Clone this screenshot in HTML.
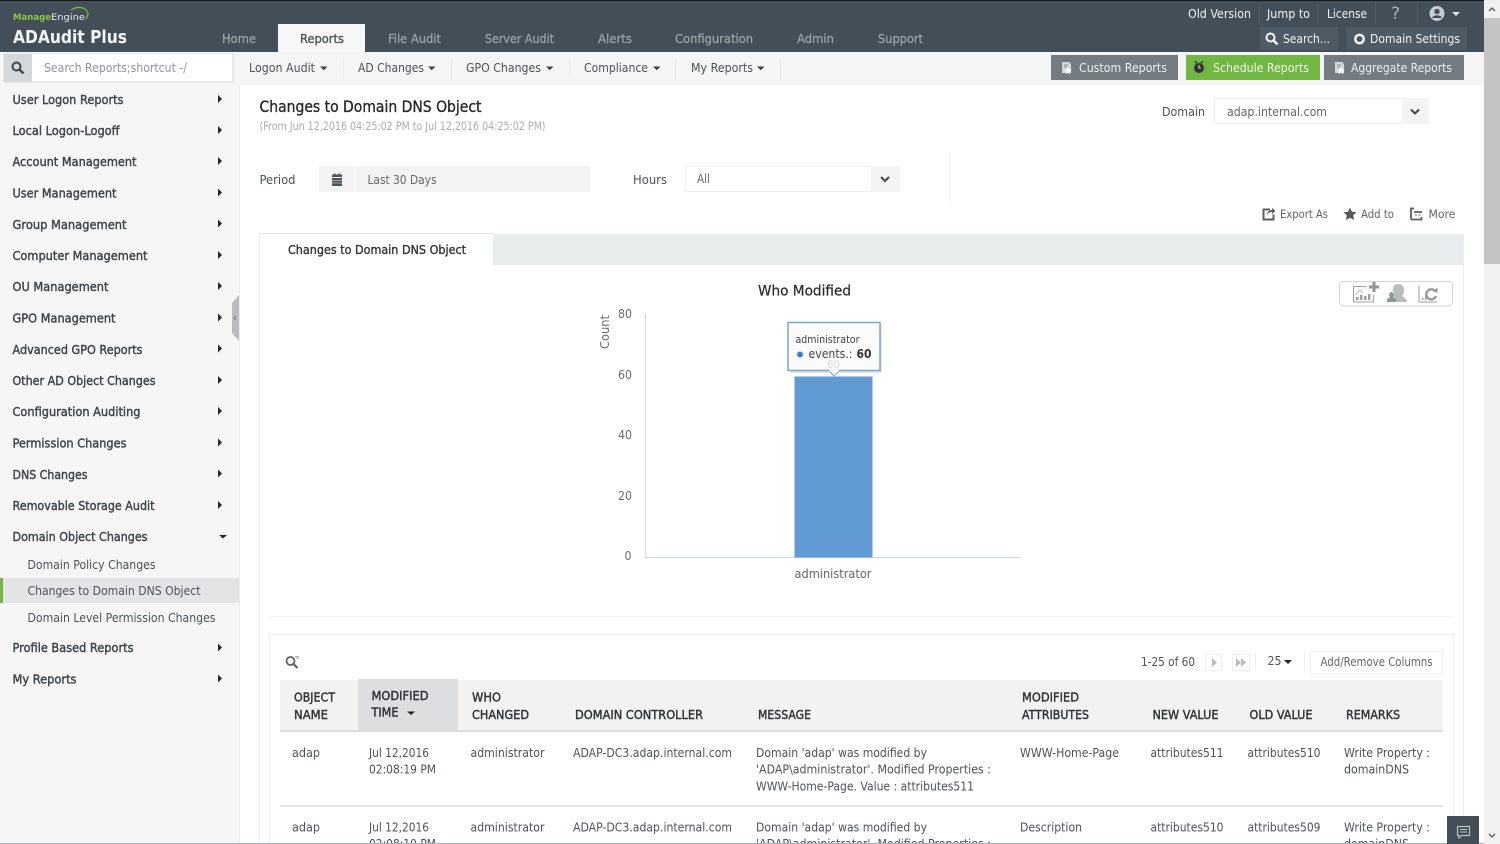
<!DOCTYPE html>
<html><head><meta charset="utf-8"><title>ADAudit Plus</title>
<style>
html,body{margin:0;padding:0;width:1500px;height:844px;overflow:hidden;background:#fff}
svg{display:block}
text{font-family:"DejaVu Sans","Liberation Sans",sans-serif;font-size:12px;fill:#444c52}
.s{stroke:#3c444a;stroke-width:.4px;fill:#3c444a}
.h{stroke:#2e3235;stroke-width:.4px;fill:#2e3235;font-size:12px}
.n{fill:#9aa3a9;font-size:12px;stroke:#9aa3a9;stroke-width:.25px}
.w{fill:#f1f3f4}
.c{fill:#4b5358}
.g{fill:#666}
.b{fill:#e9ecee}
</style></head><body>
<svg width="1500" height="844" viewBox="0 0 1500 844" xmlns="http://www.w3.org/2000/svg">
<defs></defs>
<rect width="1500" height="844" fill="#fff"/>
<!-- top bar -->
<rect width="1484" height="52" fill="#434f58"/>
<rect width="1484" height="1" fill="#15191c"/>
<text x="13" y="20" style="font-size:9px;font-weight:bold;fill:#8ac640" textLength="38" lengthAdjust="spacingAndGlyphs">Manage</text>
<text x="51" y="20" style="font-size:9px;fill:#e8ecee" textLength="34" lengthAdjust="spacingAndGlyphs">Engine</text>
<path d="M71 10c6-4 13-3 16 1 1.500 2 1 5-1 8" fill="none" stroke="#77b53b" stroke-width="1.300"/>
<text x="13" y="43" style="font-size:18px;font-weight:bold;fill:#f5f6f7" textLength="114" lengthAdjust="spacingAndGlyphs">ADAudit Plus</text>
<rect x="278" y="24" width="87" height="28" fill="#f7f7f7"/>
<text x="222" y="43" class="n" textLength="34" lengthAdjust="spacingAndGlyphs">Home</text>
<text x="300" y="43" style="fill:#4b5358;stroke:#4b5358;stroke-width:.35px" textLength="44" lengthAdjust="spacingAndGlyphs">Reports</text>
<text x="388" y="43" class="n" textLength="53" lengthAdjust="spacingAndGlyphs">File Audit</text>
<text x="485" y="43" class="n" textLength="69" lengthAdjust="spacingAndGlyphs">Server Audit</text>
<text x="598" y="43" class="n" textLength="34" lengthAdjust="spacingAndGlyphs">Alerts</text>
<text x="675" y="43" class="n" textLength="78" lengthAdjust="spacingAndGlyphs">Configuration</text>
<text x="797" y="43" class="n" textLength="37" lengthAdjust="spacingAndGlyphs">Admin</text>
<text x="878" y="43" class="n" textLength="45" lengthAdjust="spacingAndGlyphs">Support</text>
<text x="1188" y="18" class="w" textLength="63" lengthAdjust="spacingAndGlyphs">Old Version</text>
<text x="1267" y="18" class="w" textLength="43" lengthAdjust="spacingAndGlyphs">Jump to</text>
<text x="1327" y="18" class="w" textLength="40" lengthAdjust="spacingAndGlyphs">License</text>
<text x="1391" y="19" style="font-size:17px;fill:#aab2b7">?</text>
<g fill="#535e67"><rect x="1258.500" y="3" width="1" height="21"/><rect x="1317.500" y="3" width="1" height="21"/><rect x="1375" y="3" width="1" height="21"/><rect x="1417" y="3" width="1" height="21"/></g>
<circle cx="1437" cy="13.500" r="7.500" fill="#c9ced1"/><circle cx="1437" cy="11.500" r="2.700" fill="#434f58"/><path d="M1432 18c1-3.500 9-3.500 10 0" fill="#434f58"/>
<path d="M1452 12h8l-4 4z" fill="#e4e7e9"/>
<rect x="1260" y="27" width="78" height="23" fill="#4f5b64"/>
<rect x="1346" y="27" width="121" height="23" fill="#4f5b64"/>
<circle cx="1270.500" cy="37.500" r="4" fill="none" stroke="#f2f4f5" stroke-width="2"/><path d="M1273.500 40.500l4 4" stroke="#f2f4f5" stroke-width="2.400"/>
<text x="1283" y="43" class="w" textLength="47" lengthAdjust="spacingAndGlyphs">Search...</text>
<circle cx="1359.500" cy="39" r="4.200" fill="none" stroke="#f2f4f5" stroke-width="2.400"/>
<text x="1370" y="43" class="w" textLength="90" lengthAdjust="spacingAndGlyphs">Domain Settings</text>
<!-- toolbar -->
<rect y="52" width="1484" height="33" fill="#f5f5f5"/>
<rect x="3" y="53" width="231" height="30" fill="#e9e9e9"/>
<rect x="4" y="54" width="28" height="28" fill="#d3d8db"/>
<rect x="32" y="54" width="200" height="27" fill="#fff"/>
<circle cx="16.500" cy="66.500" r="4" fill="none" stroke="#3d464c" stroke-width="2"/><path d="M19.500 69.500l4 4" stroke="#3d464c" stroke-width="2.400"/>
<text x="44" y="72" style="fill:#8f969b" textLength="143" lengthAdjust="spacingAndGlyphs">Search Reports;shortcut -/</text>
<text x="249" y="72" class="c" textLength="66" lengthAdjust="spacingAndGlyphs">Logon Audit</text><path d="M320 66.500h7.500l-3.750 3.750z" fill="#3c444a"/>
<text x="358" y="72" class="c" textLength="66" lengthAdjust="spacingAndGlyphs">AD Changes</text><path d="M428 66.500h7.500l-3.750 3.750z" fill="#3c444a"/>
<text x="466" y="72" class="c" textLength="75" lengthAdjust="spacingAndGlyphs">GPO Changes</text><path d="M546 66.500h7.500l-3.750 3.750z" fill="#3c444a"/>
<text x="584" y="72" class="c" textLength="64" lengthAdjust="spacingAndGlyphs">Compliance</text><path d="M653 66.500h7.500l-3.750 3.750z" fill="#3c444a"/>
<text x="691" y="72" class="c" textLength="62" lengthAdjust="spacingAndGlyphs">My Reports</text><path d="M757 66.500h7.500l-3.750 3.750z" fill="#3c444a"/>
<g fill="#ebebeb"><rect x="343" y="58" width="1" height="21"/><rect x="451" y="58" width="1" height="21"/><rect x="569" y="58" width="1" height="21"/><rect x="675" y="58" width="1" height="21"/><rect x="780" y="58" width="1" height="21"/></g>
<rect x="1051" y="55" width="127" height="25" fill="#747b81"/>
<rect x="1186" y="55" width="134" height="25" fill="#72b743"/>
<rect x="1324" y="55" width="140" height="25" fill="#747b81"/>
<path d="M1062 62h7l2 2v9h-9z" fill="#d4d7d9"/><path d="M1064 65h4M1064 67h3" stroke="#8a9095"/><path d="M1068 67l1.200 2.400 2.600.3-1.900 1.800.5 2.500-2.400-1.200-2.400 1.200.5-2.500-1.900-1.800 2.600-.3z" fill="#fff"/>
<text x="1079" y="72" style="fill:#eff1f2" textLength="88" lengthAdjust="spacingAndGlyphs">Custom Reports</text>
<circle cx="1199" cy="68" r="5" fill="#333"/><path d="M1195 61.500l2 1.500M1203 61.500l-2 1.500" stroke="#333" fill="none" stroke-width="1.500"/><path d="M1199 65v3h2" stroke="#ddd" fill="none"/>
<text x="1213" y="72" style="fill:#eef6e6" textLength="96" lengthAdjust="spacingAndGlyphs">Schedule Reports</text>
<path d="M1335 62h7l2 2v9h-9z" fill="#d4d7d9"/><path d="M1337 65h4M1337 67h3" stroke="#8a9095"/><path d="M1341 67l1.200 2.400 2.600.3-1.900 1.800.5 2.500-2.400-1.200-2.400 1.200.5-2.500-1.900-1.800 2.600-.3z" fill="#fff"/>
<text x="1351" y="72" style="fill:#eff1f2" textLength="101" lengthAdjust="spacingAndGlyphs">Aggregate Reports</text>
<!-- scrollbar -->
<rect x="1484" y="0" width="16" height="844" fill="#f1f1f1"/>
<rect x="1484" y="18" width="16" height="246" fill="#c4c4c4"/>
<path d="M1489 11l3-3 3 3" fill="none" stroke="#555" stroke-width="1.300"/>
<path d="M1489 834l3 3 3-3" fill="none" stroke="#555" stroke-width="1.300"/>
<!-- sidebar -->
<rect y="85" width="240" height="759" fill="#f6f6f6"/>
<rect x="239" y="85" width="1" height="759" fill="#ececec"/>
<path d="M232 303l7-8v46l-7-8z" fill="#b9bdbf"/><path d="M236 316l-2 2 2 2" fill="none" stroke="#777"/>
<text x="12.500" y="104" class="s" textLength="111" lengthAdjust="spacingAndGlyphs">User Logon Reports</text>
<text x="12.500" y="135" class="s" textLength="107" lengthAdjust="spacingAndGlyphs">Local Logon-Logoff</text>
<text x="12.500" y="166" class="s" textLength="124" lengthAdjust="spacingAndGlyphs">Account Management</text>
<text x="12.500" y="197.500" class="s" textLength="104" lengthAdjust="spacingAndGlyphs">User Management</text>
<text x="12.500" y="229" class="s" textLength="114" lengthAdjust="spacingAndGlyphs">Group Management</text>
<text x="12.500" y="260" class="s" textLength="135" lengthAdjust="spacingAndGlyphs">Computer Management</text>
<text x="12.500" y="291" class="s" textLength="96" lengthAdjust="spacingAndGlyphs">OU Management</text>
<text x="12.500" y="322.500" class="s" textLength="103" lengthAdjust="spacingAndGlyphs">GPO Management</text>
<text x="12.500" y="354" class="s" textLength="130" lengthAdjust="spacingAndGlyphs">Advanced GPO Reports</text>
<text x="12.500" y="385" class="s" textLength="143" lengthAdjust="spacingAndGlyphs">Other AD Object Changes</text>
<text x="12.500" y="416" class="s" textLength="128" lengthAdjust="spacingAndGlyphs">Configuration Auditing</text>
<text x="12.500" y="447.500" class="s" textLength="114" lengthAdjust="spacingAndGlyphs">Permission Changes</text>
<text x="12.500" y="479" class="s" textLength="75" lengthAdjust="spacingAndGlyphs">DNS Changes</text>
<text x="12.500" y="510" class="s" textLength="142" lengthAdjust="spacingAndGlyphs">Removable Storage Audit</text>
<text x="12.500" y="541" class="s" textLength="135" lengthAdjust="spacingAndGlyphs">Domain Object Changes</text>
<text x="12.500" y="652" class="s" textLength="121" lengthAdjust="spacingAndGlyphs">Profile Based Reports</text>
<text x="12.500" y="683.500" class="s" textLength="64" lengthAdjust="spacingAndGlyphs">My Reports</text>
<g fill="#22272a">
<path d="M218 95l4 4-4 4z"/><path d="M218 126l4 4-4 4z"/><path d="M218 157l4 4-4 4z"/><path d="M218 188.500l4 4-4 4z"/><path d="M218 219.500l4 4-4 4z"/><path d="M218 251l4 4-4 4z"/><path d="M218 282l4 4-4 4z"/><path d="M218 313.500l4 4-4 4z"/><path d="M218 344.500l4 4-4 4z"/><path d="M218 376l4 4-4 4z"/><path d="M218 407l4 4-4 4z"/><path d="M218 438.500l4 4-4 4z"/><path d="M218 469.500l4 4-4 4z"/><path d="M218 501l4 4-4 4z"/><path d="M219 535h8l-4 3.500z"/><path d="M218 643.500l4 4-4 4z"/><path d="M218 674.500l4 4-4 4z"/>
</g>
<rect y="578" width="239" height="25" fill="#e3e4e6"/>
<rect y="578" width="3" height="25" fill="#74b743"/>
<text x="27.500" y="569" class="c" textLength="128" lengthAdjust="spacingAndGlyphs">Domain Policy Changes</text>
<text x="27.500" y="595" class="c" textLength="173" lengthAdjust="spacingAndGlyphs">Changes to Domain DNS Object</text>
<text x="27.500" y="622" class="c" textLength="188" lengthAdjust="spacingAndGlyphs">Domain Level Permission Changes</text>
<!-- heading -->
<text x="259.500" y="112" style="font-size:16px;fill:#24282b;stroke:#24282b;stroke-width:.35px" textLength="222" lengthAdjust="spacingAndGlyphs">Changes to Domain DNS Object</text>
<text x="259.500" y="130" style="font-size:11.500px;fill:#a9acae" textLength="286" lengthAdjust="spacingAndGlyphs">(From Jun 12,2016 04:25:02 PM to Jul 12,2016 04:25:02 PM)</text>
<text x="1162" y="116" class="c" textLength="43" lengthAdjust="spacingAndGlyphs">Domain</text>
<rect x="1214.500" y="98.500" width="214" height="25" fill="#fff" stroke="#eee"/>
<rect x="1402" y="98" width="27" height="26" fill="#f4f4f4"/>
<text x="1227" y="116" class="g" textLength="100" lengthAdjust="spacingAndGlyphs">adap.internal.com</text>
<path d="M1411 109.500l4 4 4-4" fill="none" stroke="#444" stroke-width="2"/>
<!-- filters -->
<text x="259.500" y="184" class="c" textLength="36" lengthAdjust="spacingAndGlyphs">Period</text>
<rect x="319" y="166" width="271" height="26" fill="#f3f3f3"/>
<rect x="355" y="166" width="1" height="26" fill="#fafafa"/>
<path d="M332 178h10v8h-10zM332 177h10v-2.500h-2v-1h-1.500v1h-3v-1h-1.500v1h-2z" fill="#4b5358"/>
<path d="M332 180.500h10M332 183h10" stroke="#f3f3f3" stroke-width=".6"/>
<text x="367.500" y="184" class="g" textLength="69" lengthAdjust="spacingAndGlyphs">Last 30 Days</text>
<text x="633" y="184" class="c" textLength="34" lengthAdjust="spacingAndGlyphs">Hours</text>
<rect x="685.500" y="166.500" width="214" height="25" fill="#fff" stroke="#eee"/>
<rect x="871" y="166" width="29" height="26" fill="#f4f4f4"/>
<text x="697" y="183" class="g" textLength="13" lengthAdjust="spacingAndGlyphs">All</text>
<path d="M881 177l4 4 4-4" fill="none" stroke="#444" stroke-width="2"/>
<rect x="949" y="155" width="1" height="48" fill="#eee"/>
<!-- actions -->
<path d="M1270 209.500h-6.500v10h10v-5" fill="none" stroke="#5a5f63" stroke-width="2"/><path d="M1267 215c0-3 2-5 5-5v-2l3.500 3-3.500 3v-2c-2 0-4 1-5 3z" fill="#5a5f63"/>
<text x="1280" y="218" style="font-size:11.500px;fill:#5e6468" textLength="48" lengthAdjust="spacingAndGlyphs">Export As</text>
<path d="M1350 207.500l2 4.200 4.500.6-3.300 3.100.9 4.600-4.100-2.300-4.100 2.300.9-4.600-3.300-3.100 4.500-.6z" fill="#55595c"/>
<text x="1361" y="218" style="font-size:11.500px;fill:#5e6468" textLength="33" lengthAdjust="spacingAndGlyphs">Add to</text>
<path d="M1411 219.500v-11h3M1411 219.500h10.500v-2.500M1414 212h8" fill="none" stroke="#5a5f63" stroke-width="1.800"/><path d="M1415 215h2M1418.500 215h2" stroke="#5a5f63"/>
<text x="1428.500" y="218" style="font-size:11.500px;fill:#5e6468" textLength="27" lengthAdjust="spacingAndGlyphs">More</text>
<!-- tab panel -->
<rect x="259" y="234" width="1205" height="610" fill="#fff"/>
<rect x="259" y="234" width="1205" height="31" fill="#e9ecec"/>
<rect x="259" y="234" width="1" height="610" fill="#ededed"/>
<rect x="1463" y="234" width="1" height="610" fill="#ededed"/>
<rect x="260" y="234" width="233" height="32" fill="#fff"/>
<rect x="259" y="233" width="234" height="1" fill="#e6e6e6"/>
<text x="288" y="254" style="fill:#2e3336;stroke:#2e3336;stroke-width:.35px" textLength="178" lengthAdjust="spacingAndGlyphs">Changes to Domain DNS Object</text>
<!-- chart -->
<text x="758" y="295.500" style="font-size:14px;fill:#24282b;stroke:#24282b;stroke-width:.2px" textLength="93" lengthAdjust="spacingAndGlyphs">Who Modified</text>
<rect x="1339.500" y="281.500" width="113" height="24.500" rx="4" fill="#fff" stroke="#d3d3d3"/>
<path d="M1353.500 286.500h13M1353.500 286.500v15.500h20v-7" fill="none" stroke="#9aa1a5"/>
<path d="M1356 300v-3h2.500v3zM1360 300v-5h2.500v5zM1364 300v-4h2.500v4zM1368 300v-6h2.500v6z" fill="#9aa1a5"/>
<path d="M1355 295l5-5 3 3" fill="none" stroke="#b5babd"/>
<path d="M1369 285.500h3.500v-3.500h3v3.500h3.500v3h-3.500v3.500h-3v-3.500h-3.500z" fill="#8d9599"/>
<path d="M1394 302h13c-.5-4-4-5-5-6 1.500-2 2.500-4 2-7-.5-4-3.500-5-6-5-3 0-5 2-5 5.500 0 1.500.5 3 1 4-.5 2-.5 3 0 8.500z" fill="#b8bdc0"/>
<path d="M1387 302v-2.500c0-1 2-1.500 3-2-1.500-2-1-5.500 1.500-5.500s3 3.500 1.500 5.500c1 .5 3 1 3 2v2.500z" fill="#8d9599"/>
<path d="M1419 285.500v16.500h18" fill="none" stroke="#9aa1a5"/><path d="M1422 300v-2h1.500v2zM1425 300v-4h1.500v4z" fill="#9aa1a5"/>
<path d="M1435 291a5 5 0 1 0 1 5" fill="none" stroke="#969da1" stroke-width="2.400"/><path d="M1432.500 291l5-3.500v5.500z" fill="#969da1"/>
<text x="604" y="344" transform="rotate(-90 609 344)" style="fill:#6b6f72" textLength="34" lengthAdjust="spacingAndGlyphs">Count</text>
<g font-size="12">
<text x="618" y="318" style="fill:#6b6f72" textLength="14" lengthAdjust="spacingAndGlyphs">80</text>
<text x="618" y="379" style="fill:#6b6f72" textLength="14" lengthAdjust="spacingAndGlyphs">60</text>
<text x="618" y="439" style="fill:#6b6f72" textLength="14" lengthAdjust="spacingAndGlyphs">40</text>
<text x="618" y="500" style="fill:#6b6f72" textLength="14" lengthAdjust="spacingAndGlyphs">20</text>
<text x="624.500" y="560" style="fill:#6b6f72" textLength="7" lengthAdjust="spacingAndGlyphs">0</text>
</g>
<rect x="645" y="314" width="1" height="243" fill="#d6dae0"/>
<rect x="645" y="557" width="375" height="1" fill="#ccd9ea"/>
<rect x="794.500" y="376.500" width="78" height="181" fill="#629ad3"/>
<text x="794.500" y="578" style="fill:#666" textLength="77" lengthAdjust="spacingAndGlyphs">administrator</text>
<rect x="790" y="324" width="92" height="49" fill="#000" opacity=".1"/>
<rect x="788" y="322.500" width="92" height="48" fill="#fbfbfb" stroke="#7ca5cc" stroke-width="1.500"/>
<text x="827" y="368" style="font-size:11px;fill:#dcdcdc" textLength="13" lengthAdjust="spacingAndGlyphs">60</text>
<path d="M829 371l5 5 5-5" fill="#fbfbfb" stroke="#7ca5cc"/><rect x="829" y="369.800" width="10" height="1.600" fill="#fbfbfb"/>
<text x="795.500" y="343" style="font-size:11px;fill:#444" textLength="64" lengthAdjust="spacingAndGlyphs">administrator</text>
<circle cx="800" cy="354.500" r="3" fill="#3e82c4"/>
<text x="808.500" y="358" style="fill:#444" textLength="44" lengthAdjust="spacingAndGlyphs">events.:</text>
<text x="856.500" y="358" style="font-weight:bold;fill:#333" textLength="15" lengthAdjust="spacingAndGlyphs">60</text>
<rect x="270" y="616" width="1183" height="1" fill="#f3f3f3"/>
<!-- table card -->
<rect x="269.500" y="634.500" width="1184" height="212" fill="#fff" stroke="#eeeeee"/>
<circle cx="290.500" cy="661" r="4" fill="none" stroke="#5b6165" stroke-width="1.800"/><path d="M293.500 664l4 4" stroke="#5b6165" stroke-width="2.200"/><path d="M295 656.500h3v2h-1.500" fill="none" stroke="#9ea3a6"/>
<text x="1141" y="666" class="c" textLength="54" lengthAdjust="spacingAndGlyphs">1-25 of 60</text>
<rect x="1205.500" y="654.500" width="16" height="16" fill="#fff" stroke="#eee"/>
<path d="M1212 658l5 4.500-5 4.500z" fill="#b9bdc0"/>
<rect x="1232.500" y="654.500" width="17" height="16" fill="#fff" stroke="#eee"/>
<path d="M1236 658l5 4.500-5 4.500zM1241 658l5 4.500-5 4.500z" fill="#b9bdc0"/>
<rect x="1255" y="651" width="1" height="20" fill="#f0f0f0"/>
<text x="1267.500" y="665" class="c" textLength="14" lengthAdjust="spacingAndGlyphs">25</text>
<path d="M1284 660h8l-4 4z" fill="#222"/>
<rect x="1304" y="651" width="1" height="20" fill="#f0f0f0"/>
<rect x="1310.500" y="651.500" width="132" height="22" fill="#fff" stroke="#efefef"/>
<text x="1320.500" y="666" style="fill:#666" textLength="112" lengthAdjust="spacingAndGlyphs">Add/Remove Columns</text>
<rect x="280" y="680" width="1163" height="50" fill="#f2f2f2"/>
<rect x="358" y="679" width="100" height="51" fill="#dcdee0"/>
<rect x="280" y="730" width="1163" height="2" fill="#dedede"/>
<rect x="280" y="805" width="1163" height="2" fill="#e3e3e3"/>
<text x="294" y="701.500" class="h" textLength="41" lengthAdjust="spacingAndGlyphs">OBJECT</text>
<text x="294" y="719" class="h" textLength="34" lengthAdjust="spacingAndGlyphs">NAME</text>
<text x="371.500" y="700" class="h" textLength="57" lengthAdjust="spacingAndGlyphs">MODIFIED</text>
<text x="371.500" y="716.500" class="h" textLength="27" lengthAdjust="spacingAndGlyphs">TIME</text>
<path d="M407 711.500h8l-4 3.500z" fill="#222"/>
<text x="472" y="701.500" class="h" textLength="29" lengthAdjust="spacingAndGlyphs">WHO</text>
<text x="472" y="719" class="h" textLength="57" lengthAdjust="spacingAndGlyphs">CHANGED</text>
<text x="575" y="719" class="h" textLength="128" lengthAdjust="spacingAndGlyphs">DOMAIN CONTROLLER</text>
<text x="758" y="719" class="h" textLength="53" lengthAdjust="spacingAndGlyphs">MESSAGE</text>
<text x="1022" y="701.500" class="h" textLength="57" lengthAdjust="spacingAndGlyphs">MODIFIED</text>
<text x="1022" y="719" class="h" textLength="67" lengthAdjust="spacingAndGlyphs">ATTRIBUTES</text>
<text x="1152.500" y="719" class="h" textLength="66" lengthAdjust="spacingAndGlyphs">NEW VALUE</text>
<text x="1249.500" y="719" class="h" textLength="63" lengthAdjust="spacingAndGlyphs">OLD VALUE</text>
<text x="1346" y="719" class="h" textLength="54" lengthAdjust="spacingAndGlyphs">REMARKS</text>
<!-- row 1 -->
<text x="292" y="757" class="c" textLength="28" lengthAdjust="spacingAndGlyphs">adap</text>
<text x="369" y="757" class="c" textLength="60" lengthAdjust="spacingAndGlyphs">Jul 12,2016</text>
<text x="369" y="773.500" class="c" textLength="67" lengthAdjust="spacingAndGlyphs">02:08:19 PM</text>
<text x="470.500" y="757" class="c" textLength="74" lengthAdjust="spacingAndGlyphs">administrator</text>
<text x="573" y="757" class="c" textLength="159" lengthAdjust="spacingAndGlyphs">ADAP-DC3.adap.internal.com</text>
<text x="756" y="757" class="c" textLength="171" lengthAdjust="spacingAndGlyphs">Domain 'adap' was modified by</text>
<text x="756" y="773.500" class="c" textLength="235" lengthAdjust="spacingAndGlyphs">'ADAP\administrator'. Modified Properties :</text>
<text x="756" y="790.500" class="c" textLength="218" lengthAdjust="spacingAndGlyphs">WWW-Home-Page. Value : attributes511</text>
<text x="1020" y="757" class="c" textLength="99" lengthAdjust="spacingAndGlyphs">WWW-Home-Page</text>
<text x="1150.500" y="757" class="c" textLength="73" lengthAdjust="spacingAndGlyphs">attributes511</text>
<text x="1247.500" y="757" class="c" textLength="73" lengthAdjust="spacingAndGlyphs">attributes510</text>
<text x="1344" y="757" class="c" textLength="86" lengthAdjust="spacingAndGlyphs">Write Property :</text>
<text x="1344" y="773.500" class="c" textLength="65" lengthAdjust="spacingAndGlyphs">domainDNS</text>
<!-- row 2 -->
<text x="292" y="831.500" class="c" textLength="28" lengthAdjust="spacingAndGlyphs">adap</text>
<text x="369" y="831.500" class="c" textLength="60" lengthAdjust="spacingAndGlyphs">Jul 12,2016</text>
<text x="369" y="848" class="c" textLength="67" lengthAdjust="spacingAndGlyphs">02:08:19 PM</text>
<text x="470.500" y="831.500" class="c" textLength="74" lengthAdjust="spacingAndGlyphs">administrator</text>
<text x="573" y="831.500" class="c" textLength="159" lengthAdjust="spacingAndGlyphs">ADAP-DC3.adap.internal.com</text>
<text x="756" y="831.500" class="c" textLength="171" lengthAdjust="spacingAndGlyphs">Domain 'adap' was modified by</text>
<text x="756" y="848" class="c" textLength="235" lengthAdjust="spacingAndGlyphs">'ADAP\administrator'. Modified Properties :</text>
<text x="1020" y="831.500" class="c" textLength="62" lengthAdjust="spacingAndGlyphs">Description</text>
<text x="1150.500" y="831.500" class="c" textLength="73" lengthAdjust="spacingAndGlyphs">attributes510</text>
<text x="1247.500" y="831.500" class="c" textLength="73" lengthAdjust="spacingAndGlyphs">attributes509</text>
<text x="1344" y="831.500" class="c" textLength="86" lengthAdjust="spacingAndGlyphs">Write Property :</text>
<text x="1344" y="848" class="c" textLength="65" lengthAdjust="spacingAndGlyphs">domainDNS</text>
<!-- bottom line and feedback -->
<rect x="0" y="843" width="1484" height="1" fill="#aab0b4"/>
<rect x="1447" y="816" width="32" height="28" fill="#434f58"/>
<path d="M1457.500 826.500h12v9h-8l-2.500 2.500v-2.500h-1.500z" fill="none" stroke="#b9c0c4" stroke-width="1.200"/><path d="M1460 829.500h7M1460 832h7" stroke="#b9c0c4"/>
</svg>
</body></html>
